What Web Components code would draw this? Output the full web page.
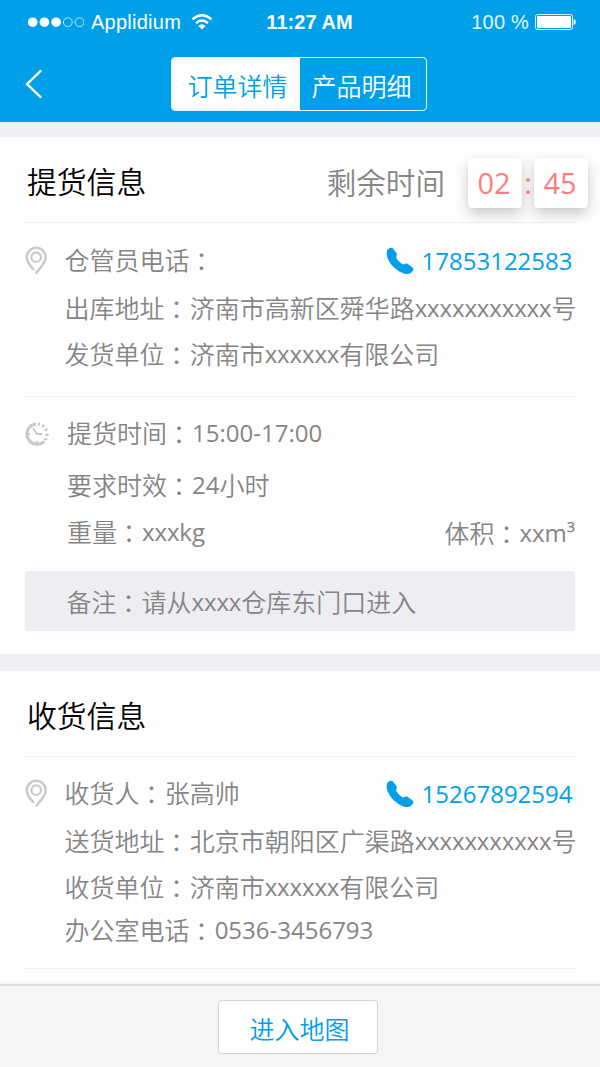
<!DOCTYPE html>
<html lang="zh-CN">
<head>
<meta charset="utf-8">
<title>订单详情</title>
<style>
html,body{margin:0;padding:0;background:#efeff4}
body{width:600px;height:1067px;overflow:hidden;font-family:"Open Sans","Noto Sans CJK SC",sans-serif;color:#858585}
</style>
</head>
<body>
<order-page></order-page>
<script>
const LATIN = '"Open Sans","Noto Sans",sans-serif';
const HAN = '"Noto Sans CJK SC","Noto Sans",sans-serif';

function define(name, markup, setup) {
  const tpl = document.createElement('template');
  tpl.innerHTML = markup;
  customElements.define(name, class extends HTMLElement {
    constructor() {
      super();
      this.attachShadow({ mode: 'open' }).append(tpl.content.cloneNode(true));
    }
    connectedCallback() { if (setup) setup(this, this.shadowRoot); }
  });
}

/* Mixed-script line: Latin runs are set slightly smaller than the Han ones. */
define('mixed-text', `<style>
  :host{display:inline-block;white-space:nowrap;line-height:1;font-family:${HAN};font-size:25px;font-weight:350}
  span{line-height:1}
  .l{font-family:${LATIN};font-size:.96em;font-weight:400;position:relative;top:-1px}
  .x{letter-spacing:-.005em}
  .c{font-family:"Noto Sans CJK TC",sans-serif;position:relative;top:1px;left:-.5px}
</style>`, (el, root) => {
  if (root.querySelector('span')) return;
  for (const run of (el.getAttribute('text') || '').match(/：|x+|[!-~³]+|[^!-~：³]+/g) || []) {
    const s = document.createElement('span');
    s.textContent = run;
    if (run === '：') { s.className = 'c'; s.lang = 'zh-TW'; }
    else if (/^x+$/.test(run)) s.className = 'l x';
    else if (/^[!-~³]/.test(run)) s.className = 'l';
    root.append(s);
  }
});

define('status-bar', `<style>
  :host{display:grid;grid-template-columns:1fr auto 1fr;height:44px;align-items:center;padding:0 24px 0 28px;color:#fff;font:20px/24px "Liberation Sans",Arial,sans-serif;box-sizing:border-box}
  div{display:flex;align-items:center}
  svg{display:block;flex:none}
  .name{margin-left:7px;letter-spacing:.25px}
  .wifi{margin-left:10px}
  b{letter-spacing:.05px;margin-left:15px}
  .r{justify-content:flex-end}
  .r span{opacity:.9;margin-right:6px;letter-spacing:.2px}
</style>
<div><svg width="56" height="12" viewBox="0 0 56 12"><g fill="#fff"><circle cx="4.7" cy="6.2" r="4.8"/><circle cx="16.4" cy="6.2" r="4.8"/><circle cx="28.1" cy="6.2" r="4.8"/></g><g fill="none" stroke="#fff" stroke-opacity=".8" stroke-width=".9"><circle cx="39.8" cy="6.2" r="4.4"/><circle cx="51.5" cy="6.2" r="4.4"/></g></svg>
<span class="name">Applidium</span>
<svg class="wifi" width="22" height="16" viewBox="0 0 22 16"><path d="M1.5 5.2Q11-2.9 20.5 5.2M5 9.1Q11 4 17 9.1" fill="none" stroke="#fff" stroke-width="2.5"/><path d="M7.4 12Q11 8.6 14.6 12L11 15.4Z" fill="#fff"/></svg></div>
<b>11:27 AM</b>
<div class="r"><span>100 %</span><svg width="41" height="16" viewBox="0 0 41 16"><rect x=".5" y=".5" width="37" height="15" rx="2" fill="none" stroke="#fff" stroke-opacity=".85"/><rect x="2" y="2" width="34" height="12" rx=".8" fill="#fff"/><path d="M38.6 5q2.3.6 2.3 3t-2.3 3z" fill="#fff"/></svg></div>`);

define('segment-tabs', `<style>
  :host{display:grid;grid-template-columns:128px 1fr;width:256px;height:54px;box-sizing:border-box;border:1.5px solid #e8f6fd;border-radius:4px;overflow:hidden;color:#fff}
  div{display:flex;align-items:center;justify-content:center;padding-top:3px}
  .on{background:#fff;color:#00a0e9;padding-left:4px}
  .off{padding-right:2px}
</style><div class="on"><mixed-text text="订单详情"></mixed-text></div><div class="off"><mixed-text text="产品明细"></mixed-text></div>`);

define('nav-bar', `<style>
  :host{display:grid;grid-template-columns:170.5px 1fr;height:78px;align-items:start;padding-top:13px;box-sizing:border-box}
  svg{display:block;margin:12px 0 0 24px}
</style><svg width="20" height="30" viewBox="0 0 20 30"><path d="M16.5 2L3 15.2 16.5 28" fill="none" stroke="#fff" stroke-width="2.4" stroke-linecap="round" stroke-linejoin="round"/></svg><segment-tabs></segment-tabs>`);

define('app-header', `<style>:host{display:block;height:121.5px;background:#00a0e9}</style><status-bar></status-bar><nav-bar></nav-bar>`);

define('pin-icon', `<style>:host{display:block;width:24px;height:30px}svg{display:block}</style>
<svg width="24" height="30" viewBox="0 0 24 30"><path d="M8.2 23.1Q1.8 16.3 1.8 11.2A9.4 9.4 0 0 1 20.6 11.2C20.6 17 15.6 21.6 11.4 26.7" fill="none" stroke="#cacaca" stroke-width="2.5" stroke-linecap="round"/><circle cx="11.2" cy="11.2" r="4.8" fill="none" stroke="#cacaca" stroke-width="2.2"/></svg>`);

define('clock-icon', `<style>:host{display:block;width:24px;height:24px}svg{display:block}</style>
<svg width="24" height="24" viewBox="0 0 24 24" fill="none" stroke="#c8c8c8"><path d="M11 1.9A10.2 10.2 0 1 0 19.4 19.2" stroke-width="3"/><path d="M13 1.9l2 .4M17.2 3.3l1.8 1.3M20.6 6.7l1 1.9M22 11.7v2.2M21.2 16.2l-1 1.9" stroke-width="3.2"/><path d="M8 6.3l4.1 5.7H17M2.5 12h2.5M12 19v2" stroke-width="2"/></svg>`);

define('phone-link', `<style>:host{display:flex;align-items:center;color:#00a0e9}svg{display:block;margin-right:8px}</style>
<svg width="28" height="28" viewBox="0 0 28 28"><path d="M2 2.2C3.7.8 5.6.2 7 1.5l3.4 4.4c1 1.6.2 3.3-.3 4.6-.2 1.3 5.7 7.1 7.3 6.9 1.6-.5 2.5-1.1 4-.6l4.6 3.2c1.5 1.3 1.8 2.4.6 4.1-1.2 1.8-2.5 2.9-5.2 3C13.8 27 1.3 16.7.7 7.2.6 4.8.9 3.2 2 2.2Z" fill="#00a0e9"/></svg>`,
(el, root) => {
  if (root.querySelector('mixed-text')) return;
  const t = document.createElement('mixed-text');
  t.setAttribute('text', el.getAttribute('number'));
  root.append(t);
});

define('info-row', `<style>
  :host{display:grid;grid-template-columns:39.6px minmax(0,1fr) auto;align-items:center;height:var(--h,48px)}
  .label{padding-left:var(--indent,0)}
</style><slot name="icon"><i></i></slot><div class="label"><slot></slot></div><slot name="end"></slot>`);

define('card-title', `<style>
  :host{display:flex;align-items:center;justify-content:space-between;height:85px;box-sizing:border-box;padding:6px 0 0 2px;color:#000}
  ::slotted(mixed-text){font-size:29.8px!important;margin-top:-3px}
</style><slot></slot><slot name="end"></slot>`);

define('count-down', `<style>
  :host{display:flex;align-items:center;color:#858585;margin-right:-13px}
  mixed-text{font-size:29.6px;margin:-1px 23px 0 0}
  .box{width:54px;height:50px;display:flex;align-items:center;justify-content:center;box-sizing:border-box;border-radius:4px;background:#fff;box-shadow:0 6px 14px rgba(0,0,0,.2),0 0 3px rgba(0,0,0,.06);font:29px/1 ${LATIN};color:#f97f7d;padding-right:2px}
  .colon{width:12px;text-align:center;font:29px/1 ${LATIN};color:#f97f7d}
</style><mixed-text text="剩余时间"></mixed-text><div class="box">02</div><div class="colon">:</div><div class="box">45</div>`);

define('info-group', `<style>:host{display:block;border-top:1px solid #efeff1;box-sizing:border-box}</style><slot></slot>`);
define('info-card', `<style>:host{display:block;background:#fefefe;padding:0 25px;box-sizing:border-box}</style><slot></slot>`);
define('note-box', `<style>:host{display:flex;align-items:center;height:60px;margin-top:16px;background:#eeedf2;border-radius:4px;padding:2px 0 0 41.5px;box-sizing:border-box}</style><slot></slot>`);

define('action-bar', `<style>
  :host{display:flex;justify-content:center;align-items:flex-start;height:83px;background:#f4f5f7;border-top:2px solid #dcdddf;box-sizing:border-box;padding:14px 4px 0 0;box-shadow:0 -1px 3px rgba(0,0,0,.06);position:relative}
  button{width:160px;height:54px;border:1px solid #d0d2d4;border-radius:4px;background:#fff;color:#00a0e9;padding:3px 0 0 3px;box-sizing:border-box;margin:0}
</style><button><mixed-text text="进入地图"></mixed-text></button>`);

define('order-page', `<style>
  :host{display:grid;grid-template-columns:600px;grid-template-rows:137px 534px 313px 83px;width:600px;height:1067px}
  .one{height:517px}
  .g1{height:174px;padding-top:14px}
  .g2{padding-top:11px}
  .g3{height:212px;padding-top:13px}
  .g4{height:15px}
  phone-link{margin-right:2.5px}
</style>
<app-header></app-header>
<info-card class="one">
  <card-title><mixed-text text="提货信息"></mixed-text><count-down slot="end"></count-down></card-title>
  <info-group class="g1">
    <info-row><pin-icon slot="icon"></pin-icon><mixed-text text="仓管员电话："></mixed-text><phone-link slot="end" number="17853122583"></phone-link></info-row>
    <info-row><mixed-text text="出库地址：济南市高新区舜华路xxxxxxxxxxx号"></mixed-text></info-row>
    <info-row style="--h:44px"><mixed-text text="发货单位：济南市xxxxxx有限公司"></mixed-text></info-row>
  </info-group>
  <info-group class="g2">
    <info-row style="--h:52px;--indent:2.4px"><clock-icon slot="icon"></clock-icon><mixed-text text="提货时间：15:00-17:00"></mixed-text></info-row>
    <info-row style="--h:51px;--indent:2.4px"><mixed-text text="要求时效：24小时"></mixed-text></info-row>
    <info-row style="--h:44px;--indent:2.4px"><mixed-text text="重量：xxxkg"></mixed-text><mixed-text slot="end" text="体积：xxm³"></mixed-text></info-row>
    <note-box><mixed-text text="备注：请从xxxx仓库东门口进入"></mixed-text></note-box>
  </info-group>
</info-card>
<info-card>
  <card-title><mixed-text text="收货信息"></mixed-text></card-title>
  <info-group class="g3">
    <info-row><pin-icon slot="icon"></pin-icon><mixed-text text="收货人：张高帅"></mixed-text><phone-link slot="end" number="15267892594"></phone-link></info-row>
    <info-row><mixed-text text="送货地址：北京市朝阳区广渠路xxxxxxxxxxx号"></mixed-text></info-row>
    <info-row style="--h:44px"><mixed-text text="收货单位：济南市xxxxxx有限公司"></mixed-text></info-row>
    <info-row style="--h:42px"><mixed-text text="办公室电话：0536-3456793"></mixed-text></info-row>
  </info-group>
  <info-group class="g4"></info-group>
</info-card>
<action-bar></action-bar>`);
</script>
</body>
</html>
